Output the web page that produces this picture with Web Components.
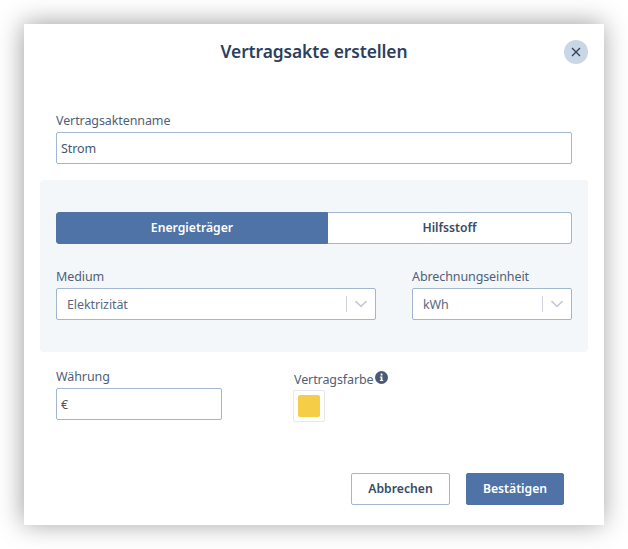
<!DOCTYPE html>
<html lang="de">
<head>
<meta charset="utf-8">
<title>Vertragsakte erstellen</title>
<style>
  html, body { margin: 0; background: #fff; }
  body { font-family: "Noto Sans", "Open Sans", sans-serif; color: #4a5a74; }
</style>
</head>
<body>
<contract-dialog heading="Vertragsakte erstellen">
  <form-field label="Vertragsaktenname" class="name">
    <text-box>Strom</text-box>
  </form-field>

  <energy-panel slot="panel">
    <segment-toggle first="Energieträger" second="Hilfsstoff"></segment-toggle>
    <select-row>
      <form-field label="Medium" style="width:320px"><select-box>Elektrizität</select-box></form-field>
      <form-field label="Abrechnungseinheit" style="width:160px"><select-box>kWh</select-box></form-field>
    </select-row>
  </energy-panel>

  <form-field slot="currency" label="Währung" style="width:166px"><text-box>€</text-box></form-field>
  <color-field slot="color" label="Vertragsfarbe" color="#f5cd47"></color-field>

  <action-button slot="actions">Abbrechen</action-button>
  <action-button slot="actions" primary>Bestätigen</action-button>
</contract-dialog>

<script>
const BORDER = '#a3b6d1'
const FONT_SCALE = '12.5px'
const TRACKING = '-.1px'

class ContractDialog extends HTMLElement {
  constructor() {
    super()
    this.attachShadow({ mode: 'open' })
  }
  connectedCallback() {
    this.shadowRoot.innerHTML = /* html */ `
    <style>
      :host {
        display: block;
        box-sizing: border-box;
        width: 580px;
        height: 501px;
        margin: 24px;
        padding-top: 16px;
        background: #fff;
        box-shadow: -1px -1px 24px rgba(0, 0, 0, .38);
      }
      header {
        display: grid;
        grid-template-columns: 1fr auto 1fr;
        align-items: center;
        height: 24px;
        padding: 0 16px;
      }
      h1 {
        grid-column: 2;
        margin: 0;
        padding-bottom: 2px;
        font-size: 17.4px;
        font-weight: 600;
        line-height: 22px;
        color: #2d3f5c;
        letter-spacing: -.1px;
        white-space: nowrap;
      }
      button {
        grid-column: 3;
        justify-self: end;
        display: flex;
        align-items: center;
        justify-content: center;
        width: 24px;
        height: 24px;
        padding: 0;
        border: 0;
        border-radius: 50%;
        background: #c9d6e5;
      }
      .name { padding: 48px 32px 0; }
      .panel { display: block; margin-top: 16px; }
      .row {
        display: flex;
        gap: 71px;
        margin-top: 16px;
        padding: 0 32px;
      }
      footer {
        display: flex;
        justify-content: flex-end;
        gap: 16px;
        margin-top: 51px;
        padding: 0 40px;
      }
    </style>
    <header>
      <h1>${this.getAttribute('heading')}</h1>
      <button aria-label="Schließen">
        <svg width="10" height="10" viewBox="0 0 10 10" fill="none" stroke="#2d3f5c" stroke-width="1.3">
          <path d="M1 1l8 8M9 1l-8 8"/>
        </svg>
      </button>
    </header>
    <div class="name"><slot></slot></div>
    <div class="panel"><slot name="panel"></slot></div>
    <div class="row"><slot name="currency"></slot><slot name="color"></slot></div>
    <footer><slot name="actions"></slot></footer>
    `
  }
}

class FormField extends HTMLElement {
  constructor() {
    super()
    this.attachShadow({ mode: 'open' })
  }
  connectedCallback() {
    this.shadowRoot.innerHTML = /* html */ `
    <style>
      :host { display: block; }
      label {
        display: block;
        height: 20px;
        font-size: ${FONT_SCALE};
        letter-spacing: ${TRACKING};
        line-height: 18px;
        color: #4f5f78;
        white-space: nowrap;
      }
    </style>
    <label>${this.getAttribute('label')}</label>
    <slot></slot>
    `
  }
}

class TextBox extends HTMLElement {
  constructor() {
    super()
    this.attachShadow({ mode: 'open' })
  }
  connectedCallback() {
    this.shadowRoot.innerHTML = /* html */ `
    <style>
      :host {
        display: block;
        box-sizing: border-box;
        height: 32px;
        padding: 0 4px;
        background: #fff;
        border: 1px solid ${BORDER};
        border-radius: 2px;
        font-size: ${FONT_SCALE};
        letter-spacing: ${TRACKING};
        line-height: 32px;
        color: #46566f;
      }
    </style>
    <slot></slot>
    `
  }
}

class SelectBox extends HTMLElement {
  constructor() {
    super()
    this.attachShadow({ mode: 'open' })
  }
  connectedCallback() {
    this.shadowRoot.innerHTML = /* html */ `
    <style>
      :host {
        display: flex;
        align-items: center;
        box-sizing: border-box;
        height: 32px;
        padding-left: 10px;
        background: #fff;
        border: 1px solid ${BORDER};
        border-radius: 2px;
        font-size: ${FONT_SCALE};
        letter-spacing: ${TRACKING};
        color: #5a6980;
      }
      .value { flex: 1; }
      .sep { width: 1px; height: 16px; background: #ccd3dc; }
      svg { margin: 0 7px 0 7px; }
    </style>
    <span class="value"><slot></slot></span>
    <span class="sep"></span>
    <svg width="14" height="8" viewBox="0 0 14 8" fill="none" stroke="#c4ccd6" stroke-width="1.6">
      <path d="M1.5 1.2L7 6.4l5.5-5.2"/>
    </svg>
    `
  }
}

class SegmentToggle extends HTMLElement {
  constructor() {
    super()
    this.attachShadow({ mode: 'open' })
  }
  connectedCallback() {
    this.shadowRoot.innerHTML = /* html */ `
    <style>
      :host {
        display: grid;
        grid-template-columns: 272px 1fr;
        height: 32px;
        font-size: 12.2px;
        font-weight: 600;
        line-height: 30px;
        text-align: center;
      }
      div { box-sizing: border-box; border: 1px solid ${BORDER}; }
      .on {
        background: #4f73a6;
        border-color: #4f73a6;
        border-radius: 3px 0 0 3px;
        color: #fff;
      }
      .off {
        background: #fff;
        border-left: 0;
        border-radius: 0 3px 3px 0;
        color: #3a4a64;
      }
    </style>
    <div class="on">${this.getAttribute('first')}</div>
    <div class="off">${this.getAttribute('second')}</div>
    `
  }
}

class EnergyPanel extends HTMLElement {
  constructor() {
    super()
    this.attachShadow({ mode: 'open' })
  }
  connectedCallback() {
    this.shadowRoot.innerHTML = /* html */ `
    <style>
      :host {
        display: block;
        margin: 0 16px;
        padding: 32px 16px;
        background: #f4f7fa;
        border-radius: 4px;
      }
    </style>
    <slot></slot>
    `
  }
}

class SelectRow extends HTMLElement {
  constructor() {
    super()
    this.attachShadow({ mode: 'open' })
  }
  connectedCallback() {
    this.shadowRoot.innerHTML = /* html */ `
    <style>
      :host {
        display: flex;
        justify-content: space-between;
        margin-top: 24px;
      }
    </style>
    <slot></slot>
    `
  }
}

class ColorField extends HTMLElement {
  constructor() {
    super()
    this.attachShadow({ mode: 'open' })
  }
  connectedCallback() {
    this.shadowRoot.innerHTML = /* html */ `
    <style>
      :host { display: block; padding-top: 1px; }
      .label {
        display: flex;
        align-items: center;
        gap: 1px;
        height: 21px;
        padding-left: 1px;
        font-size: ${FONT_SCALE};
        letter-spacing: ${TRACKING};
        line-height: 16px;
        color: #4f5f78;
        white-space: nowrap;
      }
      .label svg { margin-top: -4px; }
      .swatch {
        box-sizing: border-box;
        width: 32px;
        height: 32px;
        padding: 4px;
        background: #fff;
        border: 1px solid #e6e8eb;
        border-radius: 2px;
      }
      .swatch div { width: 22px; height: 22px; border-radius: 2px; background: ${this.getAttribute('color')}; }
    </style>
    <div class="label">
      <span>${this.getAttribute('label')}</span>
      <svg width="13" height="13" viewBox="0 0 13 13">
        <circle cx="6.5" cy="6.5" r="6.5" fill="#4a5a74"/>
        <rect x="5.6" y="2.6" width="1.9" height="1.9" rx=".5" fill="#fff"/>
        <path d="M4.9 5.4h2.5v3.5h.8v1H4.9v-1h.8V6.4h-.8z" fill="#fff"/>
      </svg>
    </div>
    <div class="swatch"><div></div></div>
    `
  }
}

class ActionButton extends HTMLElement {
  constructor() {
    super()
    this.attachShadow({ mode: 'open' })
  }
  connectedCallback() {
    const primary = this.hasAttribute('primary')
    this.shadowRoot.innerHTML = /* html */ `
    <style>
      :host {
        display: block;
        box-sizing: border-box;
        width: ${primary ? 98 : 99}px;
        height: 32px;
        background: ${primary ? '#4f73a6' : '#fff'};
        border: 1px solid ${primary ? '#4f73a6' : BORDER};
        border-radius: 2px;
        font-size: 12.2px;
        font-weight: 600;
        line-height: 30px;
        text-align: center;
        color: ${primary ? '#fff' : '#3a4a64'};
      }
    </style>
    <slot></slot>
    `
  }
}

customElements.define('contract-dialog', ContractDialog)
customElements.define('form-field', FormField)
customElements.define('text-box', TextBox)
customElements.define('select-box', SelectBox)
customElements.define('segment-toggle', SegmentToggle)
customElements.define('energy-panel', EnergyPanel)
customElements.define('select-row', SelectRow)
customElements.define('color-field', ColorField)
customElements.define('action-button', ActionButton)
</script>
</body>
</html>
